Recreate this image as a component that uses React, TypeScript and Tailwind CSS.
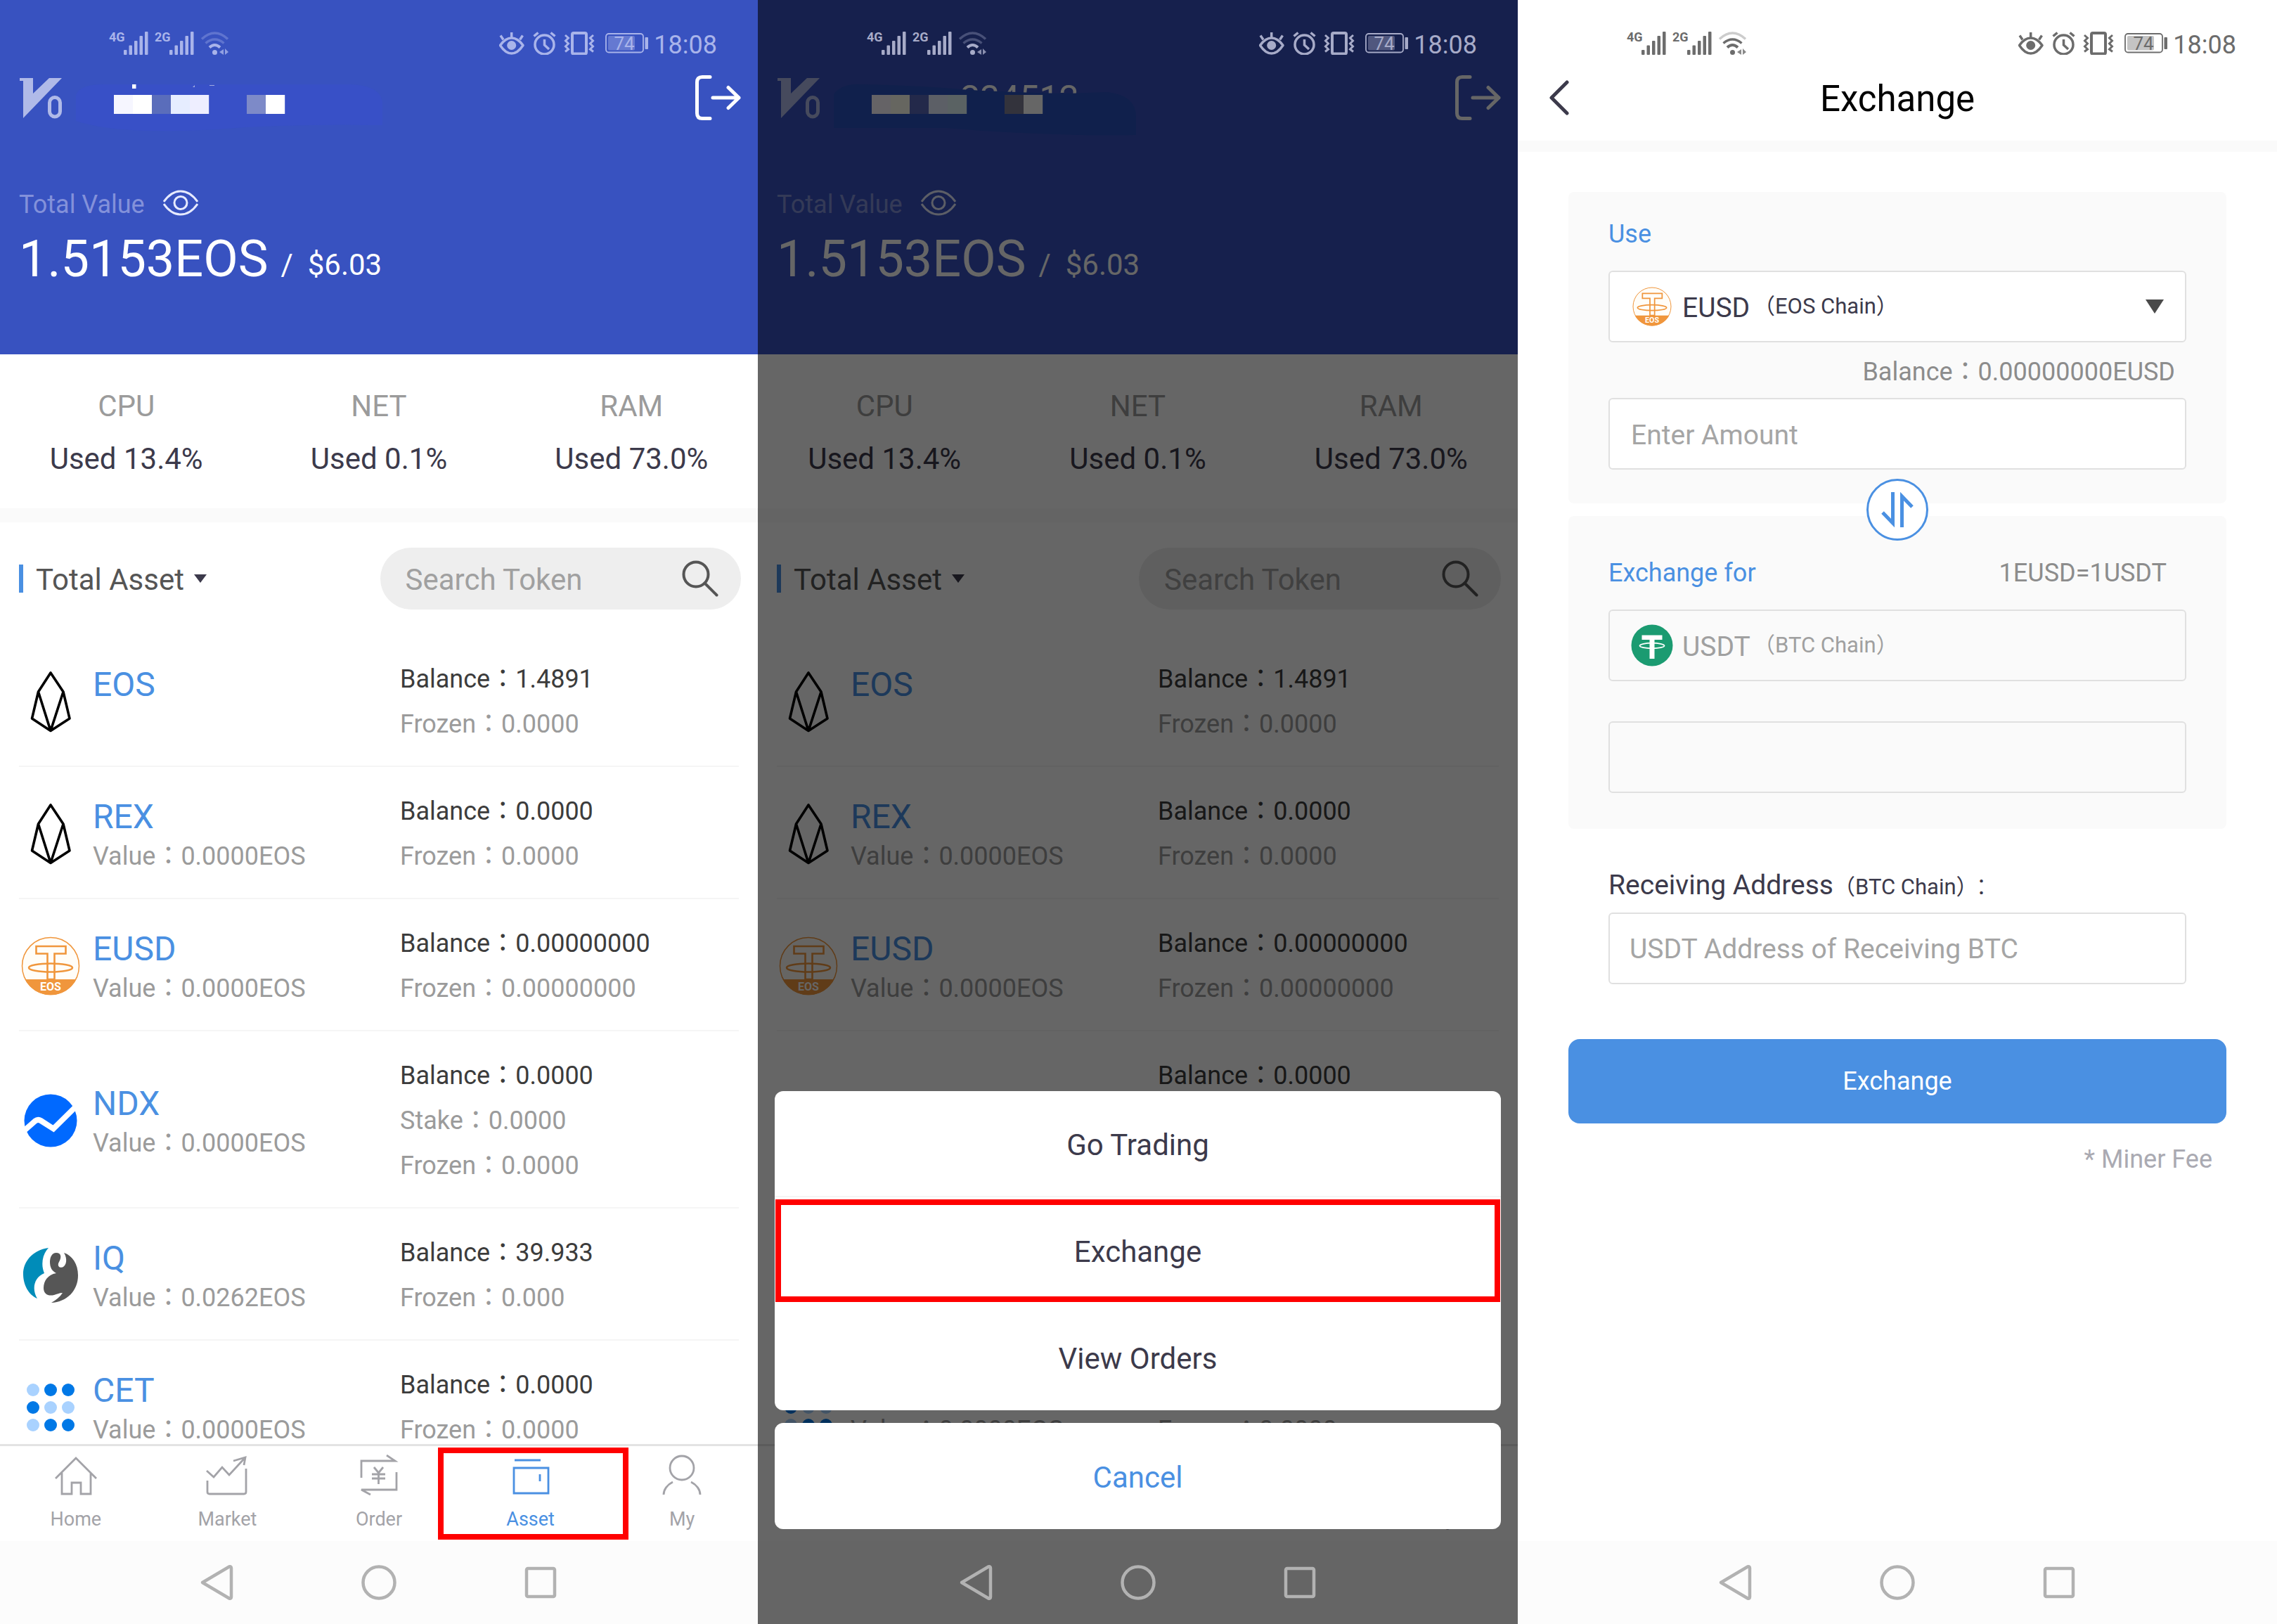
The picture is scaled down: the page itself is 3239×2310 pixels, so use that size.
import type { ReactNode } from "react";

/* ---------- system bars ---------- */

function Bars({ x }: { x: number }) {
  return (
    <g fill="currentColor">
      <rect x={x} y="26" width="4.5" height="7" rx="1" />
      <rect x={x + 7.5} y="19.5" width="4.5" height="13.5" rx="1" />
      <rect x={x + 15} y="13" width="4.5" height="20" rx="1" />
      <rect x={x + 22.5} y="6" width="4.5" height="27" rx="1" />
      <rect x={x + 30} y="0" width="4.5" height="33" rx="1" />
    </g>
  );
}

function StatusBar({ tone, strongWifi = false }: { tone: string; strongWifi?: boolean }) {
  return (
    <div className={`relative z-20 flex items-center justify-between pt-[45px] pr-[58px] pl-[158px] ${tone}`}>
      <svg className="overflow-visible" width="168" height="33" viewBox="0 0 168 33" fill="none" stroke="currentColor" aria-hidden="true">
        <g fill="currentColor" stroke="none" fontFamily="Roboto" fontWeight="700" fontSize="18">
          <text x="-3" y="14">4G</text>
          <text x="62" y="14">2G</text>
        </g>
        <g stroke="none">
          <Bars x={18} />
          <Bars x={83} />
          <circle cx="147.5" cy="29.5" r="3.5" fill="currentColor" />
          <path d="M160 25 V33 L154 29Z M162 24 V33 L167 29Z" fill="currentColor" opacity=".8" />
        </g>
        <path d="M140 22.5 Q147.5 15.5 155 22.5" strokeWidth="4" />
        <path d="M134.500 16.500 Q147.500 5.500 160.500 16.500" strokeWidth="3.500" opacity={strongWifi ? 1 : 0.35} />
        <path d="M129 10.500 Q147.500 -6.500 166 10.500" strokeWidth="3.500" opacity=".35" />
      </svg>
      <div className="flex items-center gap-2">
        <svg width="212" height="33" viewBox="0 0 212 33" fill="none" stroke="currentColor" aria-hidden="true">
          <path d="M1.500 19.500 Q9 9 17.700 9 Q26.500 9 34 19.500 Q26.500 31 17.700 31 Q9 31 1.500 19.500Z" strokeWidth="3.500" strokeLinejoin="round" />
          <path d="M17.700 1 V9 M2 5.500 L6 11.500 M33.500 5.500 L29.500 11.500" strokeWidth="3.500" />
          <circle cx="17.700" cy="19.500" r="6.500" fill="currentColor" stroke="none" />
          <circle cx="64.500" cy="18.500" r="13.500" strokeWidth="3.500" />
          <path d="M64.500 11 V19 L71 25 M49.500 6.500 L55.500 1.500 M73.500 1.500 L79.500 6.500" strokeWidth="3.500" />
          <rect x="104" y="2" width="20" height="29.500" rx="2" strokeWidth="4" />
          <path d="M94 5 L98.500 9 L94.500 13 L98.500 17 L94.500 21 L98.500 25 L94 28.500 M134 5 L129.500 9 L133.500 13 L129.500 17 L133.500 21 L129.500 25 L134 28.500" strokeWidth="3" />
          <rect x="152" y="3" width="53" height="26.500" rx="4" strokeWidth="1.800" />
          <rect x="155" y="6" width="38" height="20.500" rx="2" fill="currentColor" stroke="none" opacity=".4" />
          <rect x="207.500" y="8" width="4.500" height="17" rx="1" fill="currentColor" stroke="none" />
          <text x="178" y="25.500" textAnchor="middle" fontFamily="Roboto" fontSize="26" fill="currentColor" stroke="none">74</text>
        </svg>
        <span className="self-end text-[36px] leading-7">18:08</span>
      </div>
    </div>
  );
}

function SystemNav({ background }: { background: string }) {
  return (
    <nav aria-label="System" className={`relative z-20 flex h-[118px] shrink-0 items-center justify-center gap-[180px] text-[#b2b2b2] ${background}`}>
      <button type="button" aria-label="Back">
        <svg width="50" height="52" viewBox="0 0 50 52" fill="none" stroke="currentColor" strokeWidth="4.500" strokeLinejoin="round">
          <path d="M4 26 L42 3.500 Q45 2.500 45 5.500 V46.500 Q45 49.500 42 48.500Z" />
        </svg>
      </button>
      <button type="button" aria-label="Home screen">
        <svg width="50" height="52" viewBox="0 0 50 52" fill="none" stroke="currentColor" strokeWidth="4.500">
          <circle cx="25" cy="26" r="22.500" />
        </svg>
      </button>
      <button type="button" aria-label="Recent apps">
        <svg width="50" height="52" viewBox="0 0 50 52" fill="none" stroke="currentColor" strokeWidth="4.500">
          <rect x="5" y="6" width="40" height="40" rx="2" />
        </svg>
      </button>
    </nav>
  );
}

/* ---------- token logos ---------- */

function EosLogo() {
  return (
    <svg width="84" height="88" viewBox="0 0 84 88" fill="none" stroke="#000" strokeWidth="3.600" strokeLinejoin="round" aria-hidden="true">
      <path d="M42 3 L24.500 30 L15.500 68 L42 85.500 L69 68 L60 30Z M24.500 30 L42 85.500 L60 30" />
    </svg>
  );
}

function EusdLogo({ size }: { size: number }) {
  return (
    <svg width={size} height={size} viewBox="0 0 84 84" fill="none" stroke="#f0963c" aria-hidden="true">
      <circle cx="42" cy="42" r="40.500" fill="#fffdf8" strokeWidth="1.500" />
      <path d="M5.500 61 H78.500 A41 41 0 0 1 5.500 61Z" fill="#f0963c" stroke="none" />
      <path d="M21.500 14 H63.500 V24.500 H47.500 V61 H37.500 V24.500 H21.500Z" strokeWidth="2.600" />
      <ellipse cx="42" cy="44.500" rx="31" ry="6" strokeWidth="2.600" />
      <text x="42" y="77" textAnchor="middle" fontFamily="Roboto" fontWeight="700" fontSize="16" fill="#fff" stroke="none">EOS</text>
    </svg>
  );
}

function NdxLogo() {
  return (
    <svg width="84" height="84" viewBox="0 0 84 84" fill="none" aria-hidden="true">
      <circle cx="42" cy="42" r="37.500" fill="#0069ff" />
      <path d="M0 60 L20 42.500 Q24 39.500 28 42 L46 53.500 L84 16" stroke="#fff" strokeWidth="8" />
    </svg>
  );
}

function IqLogo() {
  return (
    <svg width="84" height="84" viewBox="0 0 84 84" aria-hidden="true">
      <path d="M39 3 C20 5 3 20 3 40 C3 56 11 70 23 75 C15 62 18 45 33 39 C28 28 30 12 39 3Z" fill="#008cb9" />
      <path d="M50 10 C44 10 41 16 41 23 C41 31 44 36 50 39 C38 41 32 50 32 60 C32 69 39 72 47 70 C51 69 54 67 59 67 C55 73 50 77 43 81 C65 80 81 64 81 42 C81 26 73 14 61 10 C66 18 65 28 59 30.500 C54 32 51 28 54 23 C58 16 57 10 50 10Z" fill="#565656" />
    </svg>
  );
}

const cetDots = [false, true, true, true, false, false, false, true, true];

function CetLogo() {
  return (
    <svg width="84" height="84" viewBox="0 0 84 84" aria-hidden="true">
      {cetDots.map((dark, i) => (
        <circle key={i} cx={17 + (i % 3) * 25} cy={17 + Math.floor(i / 3) * 25} r="9" fill={dark ? "#0078e6" : "#a9d2ff"} />
      ))}
    </svg>
  );
}

function UsdtLogo() {
  return (
    <svg width="60" height="60" viewBox="0 0 60 60" fill="none" aria-hidden="true">
      <circle cx="30" cy="30" r="29.500" fill="#1b9b71" />
      <path d="M15.500 15.500 H44.500 V22 H33.500 V49 H26.500 V22 H15.500Z" fill="#fff" />
      <ellipse cx="30" cy="30.500" rx="17.500" ry="3.800" stroke="#fff" strokeWidth="1.800" />
    </svg>
  );
}

/* ---------- wallet screen ---------- */

type Token = {
  name: string;
  logo: ReactNode;
  value: string;
  lines: [string, string][];
};

const tokens: Token[] = [
  { name: "EOS", logo: <EosLogo />, value: "", lines: [["Balance", "1.4891"], ["Frozen", "0.0000"]] },
  { name: "REX", logo: <EosLogo />, value: "0.0000EOS", lines: [["Balance", "0.0000"], ["Frozen", "0.0000"]] },
  { name: "EUSD", logo: <EusdLogo size={84} />, value: "0.0000EOS", lines: [["Balance", "0.00000000"], ["Frozen", "0.00000000"]] },
  { name: "NDX", logo: <NdxLogo />, value: "0.0000EOS", lines: [["Balance", "0.0000"], ["Stake", "0.0000"], ["Frozen", "0.0000"]] },
  { name: "IQ", logo: <IqLogo />, value: "0.0262EOS", lines: [["Balance", "39.933"], ["Frozen", "0.000"]] },
  { name: "CET", logo: <CetLogo />, value: "0.0000EOS", lines: [["Balance", "0.0000"], ["Frozen", "0.0000"]] },
];

const resources = [
  { label: "CPU", used: "Used 13.4%" },
  { label: "NET", used: "Used 0.1%" },
  { label: "RAM", used: "Used 73.0%" },
];

const tabs: { label: string; active?: boolean; icon: ReactNode }[] = [
  { label: "Home", icon: <path d="M1 34 L30 5 L59 34 M10 26 V56 H24 V40 H37 V56 H51 V26" /> },
  { label: "Market", icon: <path d="M1 23 L11 32 L23 18 L33 29 L56 4 M39 9 L56 4 L54 15 M2 37 V53 Q2 56 5 56 H54 Q57 56 57 53 V20" /> },
  { label: "Order", icon: <path d="M5 33 V9 H53 L41 1 M55 25 V50 H5 L18 57 M23 18 L29.500 26 L36 18 M29.500 26 V42 M20 28 H39 M20 34 H39" /> },
  { label: "Asset", active: true, icon: <path d="M7 8 H44 M6 19 H55 V55 H6Z M43 28 V38" /> },
  { label: "My", icon: <path d="M30 2 A17 17 0 0 1 30 36 A17 17 0 0 1 30 2 M17 39 C9 43 4 50 4 57 M43 39 C51 43 56 50 56 57" /> },
];

function HiddenName({ dimmed }: { dimmed: boolean }) {
  const cells = dimmed
    ? ["#fdf8ff", "#fffff0", "#5866b8", "#e6eeff", "#e0f4f8", "", "", "#808096", "#ffffff"]
    : ["#f6f6ff", "#ffffff", "#5a6dbb", "#e6edff", "#eeeeff", "", "", "#7d8ac8", "#ffffff"];
  return (
    <svg className="overflow-visible" width="450" height="66" viewBox="0 0 450 66" aria-label="Hidden account name" role="img">
      {dimmed ? (
        <>
          <text x="180" y="51" fontFamily="Roboto" fontSize="50" fill="#fff">234512</text>
          <path d="M0 76 V28 Q12 12 40 14 Q130 16 180 21 Q240 25 330 27 L390 25 Q430 30 430 60 V86 Q300 88 160 76Z" fill="#2850be" />
        </>
      ) : (
        <>
          <path d="M0 66 V30 Q4 14 40 14 L390 14 Q434 16 436 40 V72 Q300 70 200 78 Q60 86 0 66Z" fill="#3850c7" />
          <path d="M80 14 H85.500 V20 H80Z" fill="#fff" />
          <path d="M166 18 L169 15 V18Z M190 15 H197 V16 H190Z" fill="#a0acdf" />
        </>
      )}
      {cells.map((fill, i) => (fill ? <rect key={i} x={54 + i * 27} y="29" width="27.200" height="27" fill={fill} /> : null))}
    </svg>
  );
}

function WalletScreen({ statusTone, navBackground, dimmed = false, children }: { statusTone: string; navBackground: string; dimmed?: boolean; children?: ReactNode }) {
  return (
    <section className="relative flex h-full min-w-0 flex-col overflow-hidden bg-white">
      <header className="bg-[#3852c0] pb-[93px] text-white">
        <StatusBar tone={statusTone} />
        <div className="mt-7 flex h-[66px] items-center justify-between pr-6 pl-7">
          <div className="flex items-center gap-5">
            <svg width="60" height="66" viewBox="0 0 60 66" role="img" aria-label="V0 level">
              <path d="M0 5 H19 V27 L42 5 H60 L5 62 V9 H0Z" fill="#b0bae8" />
              <rect x="42.500" y="32.500" width="15" height="27.500" rx="7.500" fill="none" stroke="#b0bae8" strokeWidth="5" />
            </svg>
            <HiddenName dimmed={dimmed} />
          </div>
          <button type="button" aria-label="Log out">
            <svg width="66" height="66" viewBox="0 0 66 66" fill="none" stroke="#fff" strokeWidth="5" strokeLinecap="round" strokeLinejoin="round">
              <path d="M22 3.500 H11 Q3.500 3.500 3.500 11 V55 Q3.500 62.500 11 62.500 H22 M26 33 H63 M48 18.500 L63 33 L48 47.500" />
            </svg>
          </button>
        </div>
        <div className="mt-[95px] flex h-12 items-center gap-[26px] pl-[27px]">
          <span className="text-[36px] leading-[48px] text-[#8391da]">Total Value</span>
          <button type="button" aria-label="Hide value" className="pb-1">
            <svg width="50" height="38" viewBox="0 0 50 38" fill="none" stroke="#e6eaff" strokeWidth="3">
              <path d="M1 17 C8 7 16 2 25 2 S42 7 49 17 M1 20 C8 30 16 35 25 35 S42 30 49 20" />
              <circle cx="25" cy="18.500" r="9" />
            </svg>
          </button>
        </div>
        <div className="mt-3 flex items-end gap-[18px] pl-[27px]">
          <span className="text-[72px] leading-[84px]">1.5153EOS</span>
          <span className="pb-2.5 text-[42px] leading-[48px] whitespace-pre">/  $6.03</span>
        </div>
      </header>

      <dl className="grid grid-cols-3 pt-11 pb-10 text-center text-[42px] leading-[60px]">
        {resources.map((r) => (
          <div key={r.label} className="flex flex-col gap-[15px]">
            <dt className="text-[#9b9b9b]">{r.label}</dt>
            <dd className="text-[#3c3a4b]">{r.used}</dd>
          </div>
        ))}
      </dl>
      <div className="h-5 shrink-0 bg-[#fafafa]" />

      <div className="flex items-center justify-between py-9 pr-6 pl-[27px]">
        <div className="flex items-center text-[#555]">
          <span className="mr-[18px] h-10 w-1.5 bg-[#4a90e2]" />
          <select aria-label="Asset filter" className="field-sizing-content appearance-none bg-transparent pt-1 text-[42px] leading-[56px]">
            <option>Total Asset</option>
          </select>
          <svg className="pointer-events-none ml-[14px]" width="18" height="12" viewBox="0 0 18 12" aria-hidden="true">
            <path d="M0 0 H18 L9 12Z" fill="#3c3a4b" />
          </svg>
        </div>
        <label className="flex h-[88px] w-1/2 items-center rounded-full bg-[#eee] pr-8 pl-9">
          <input type="search" aria-label="Search Token" placeholder="Search Token" className="min-w-0 flex-1 bg-transparent pt-1 text-[42px] leading-[56px] outline-none placeholder:text-[#a0a0a0]" />
          <svg width="52" height="52" viewBox="0 0 52 52" fill="none" stroke="#555" strokeWidth="4" strokeLinecap="round" aria-hidden="true">
            <circle cx="20" cy="20" r="17.500" />
            <path d="M32.500 32.500 L49.500 49.500" />
          </svg>
        </label>
      </div>

      <ul className="min-h-0 flex-1 overflow-hidden px-[27px]">
        {tokens.map((t) => (
          <li key={t.name} className="flex items-center border-b-2 border-[#f5f5f5] pt-[31px] pb-[27px] last:border-0">
            <span className="flex w-[90px] shrink-0 justify-center">{t.logo}</span>
            <div className="w-[452px] shrink-0 pt-2 pl-[15px]">
              <p className="text-[48px] leading-[56px] text-[#4a90e2]">{t.name}</p>
              <p className="h-14 text-[36px] leading-[56px] text-[#9b9b9b]">{t.value && `Value：${t.value}`}</p>
            </div>
            <div className="text-[36px] leading-[64px] text-[#9b9b9b]">
              {t.lines.map(([label, amount]) => (
                <p key={label} className="first:text-[#3c3c3c]">
                  {label}：{amount}
                </p>
              ))}
            </div>
          </li>
        ))}
      </ul>

      <nav aria-label="Main" className="grid h-[138px] shrink-0 grid-cols-5 border-t-[3px] border-[#e3e3e3] bg-white">
        {tabs.map((tab) => (
          <a key={tab.label} href={`#${tab.label.toLowerCase()}`} className={tab.active ? "relative flex flex-col items-center gap-[18px] pt-3 text-[#4a90e2]" : "flex flex-col items-center gap-[18px] pt-3 text-[#a3a3a8]"}>
            <svg width="60" height="58" viewBox="0 0 60 58" fill="none" stroke="currentColor" strokeWidth="2.800" aria-hidden="true">
              {tab.icon}
            </svg>
            <span className="text-[27px] leading-8">{tab.label}</span>
            {tab.active && !dimmed && <span className="absolute inset-y-[2px] -right-8 -left-6 border-8 border-[#f00]" />}
          </a>
        ))}
      </nav>
      <SystemNav background={navBackground} />
      {children}
    </section>
  );
}

function ActionSheet() {
  return (
    <div role="dialog" aria-label="Token actions" className="absolute inset-0 z-10 flex flex-col justify-end gap-[18px] bg-black/60 px-6 pb-[135px] text-[42px] leading-[56px] text-[#3c3a4b]">
      <div className="flex flex-col rounded-xl bg-white">
        <button type="button" className="h-[151px] border-b-2 border-[#f5f5f5] pt-1">Go Trading</button>
        <button type="button" className="relative h-[152px] pt-1">
          Exchange
          <span className="absolute inset-x-[1px] inset-y-[3px] border-8 border-[#f00]" />
        </button>
        <button type="button" className="h-[151px] pt-1">View Orders</button>
      </div>
      <button type="button" className="h-[151px] rounded-xl bg-white pt-1 text-[#4a90e2]">Cancel</button>
    </div>
  );
}

/* ---------- exchange screen ---------- */

function CurrencySelect({ label, code, chain, logo, disabled = false }: { label: string; code: string; chain: string; logo: ReactNode; disabled?: boolean }) {
  return (
    <div className={disabled ? "relative text-[#a0a0a0]" : "relative text-[#3c3a4b]"}>
      <select
        aria-label={label}
        disabled={disabled}
        className={
          disabled
            ? "block h-[102px] w-full appearance-none rounded-md border-2 border-[#e0e0e0] bg-[#fafafa] pt-1 pl-[103px] text-[39px] text-[#a0a0a0] opacity-100"
            : "block h-[102px] w-full appearance-none rounded-md border-2 border-[#e0e0e0] bg-white pt-1 pl-[103px] text-[39px]"
        }
      >
        <option>{code}</option>
      </select>
      <span className="pointer-events-none absolute inset-y-0 left-8 flex w-[60px] items-center justify-center">{logo}</span>
      <span className="pointer-events-none absolute inset-y-0 left-[206px] flex items-center text-[31px]">（{chain}）</span>
      {!disabled && (
        <svg className="pointer-events-none absolute top-[41px] right-8" width="26" height="20" viewBox="0 0 26 20" aria-hidden="true">
          <path d="M0 0 H26 L13 20Z" fill="#4a4a4a" />
        </svg>
      )}
    </div>
  );
}

function ExchangeScreen() {
  return (
    <section className="flex h-full min-w-0 flex-col bg-white">
      <StatusBar tone="text-[#6c6c6c]" strongWifi />
      <header className="relative mt-7 flex h-[94px] shrink-0 justify-center">
        <button type="button" aria-label="Go back" className="absolute top-2 left-11">
          <svg width="30" height="50" viewBox="0 0 30 50" fill="none" stroke="#3c3a4b" strokeWidth="5" strokeLinecap="round" strokeLinejoin="round">
            <path d="M26 3 L4 25 L26 47" />
          </svg>
        </button>
        <h1 className="text-[51px] leading-[70px] text-black">Exchange</h1>
      </header>
      <div className="h-4 shrink-0 bg-[#fafafa]" />

      <form className="mt-[57px] flex flex-1 flex-col px-[72px]" onSubmit={(e) => e.preventDefault()}>
        <div className="rounded-lg bg-[#fafafa] px-[57px] pt-9 pb-12">
          <p className="mb-7 text-[36px] leading-[48px] text-[#4a90e2]">Use</p>
          <CurrencySelect label="Use" code="EUSD" chain="EOS Chain" logo={<EusdLogo size={56} />} />
          <p className="mt-[18px] mb-[13px] pr-4 text-right text-[36px] leading-[48px] text-[#8c8c8c]">Balance：0.00000000EUSD</p>
          <input aria-label="Amount" placeholder="Enter Amount" className="block h-[102px] w-full rounded-md border-2 border-[#e0e0e0] bg-white px-[30px] pt-1 text-[39px] outline-none placeholder:text-[#a5a5a5]" />
        </div>
        <div className="relative z-10 flex h-[18px] items-center justify-center">
          <button type="button" aria-label="Swap currencies" className="flex size-[88px] shrink-0 items-center justify-center rounded-full border-[3px] border-[#4a90e2] bg-white">
            <svg width="50" height="54" viewBox="0 0 50 54" fill="none" stroke="#4a90e2" strokeWidth="5">
              <path d="M18.500 2 V46 L4 31 M31.500 52 V8 L46 23" />
            </svg>
          </button>
        </div>
        <div className="rounded-lg bg-[#fafafa] px-[57px] pt-[57px] pb-[51px]">
          <div className="mb-7 flex justify-between pr-7 text-[36px] leading-[48px]">
            <p className="text-[#4a90e2]">Exchange for</p>
            <p className="text-[#8c8c8c]">1EUSD=1USDT</p>
          </div>
          <CurrencySelect label="Exchange for" code="USDT" chain="BTC Chain" logo={<UsdtLogo />} disabled />
          <input aria-label="Amount received" readOnly className="mt-[57px] block h-[102px] w-full rounded-md border-2 border-[#e0e0e0] bg-[#fafafa] px-[30px] text-[39px]" />
        </div>
        <div className="mt-14 px-[57px] text-[39px] text-[#3c3a4b]">
          <label htmlFor="address" className="block h-12 leading-[48px]">
            Receiving Address<span className="text-[31px] leading-none">（BTC Chain）</span>:
          </label>
          <input id="address" placeholder="USDT Address of Receiving BTC" className="mt-[15px] block h-[102px] w-full rounded-md border-2 border-[#e0e0e0] bg-white px-7 pt-0.5 outline-none placeholder:text-[#a5a5a5]" />
        </div>
        <button type="submit" className="mt-[78px] h-[120px] rounded-2xl bg-[#4a90e2] text-[36px] leading-[48px] text-white">Exchange</button>
        <p className="mt-[27px] pr-5 text-right text-[36px] leading-[48px] text-[#aaaab2]">* Miner Fee</p>
      </form>
      <SystemNav background="bg-[#fcfcfc]" />
    </section>
  );
}

export default function App() {
  return (
    <main className="grid h-screen grid-cols-[1078fr_1081fr_1080fr] font-['Roboto','Noto_Sans_CJK_JP',sans-serif]">
      <WalletScreen statusTone="text-[#a9b4ea]" navBackground="bg-[#fcfcfc]" />
      <WalletScreen statusTone="text-[#a7abc8]" navBackground="bg-[#656565]" dimmed>
        <ActionSheet />
      </WalletScreen>
      <ExchangeScreen />
    </main>
  );
}
